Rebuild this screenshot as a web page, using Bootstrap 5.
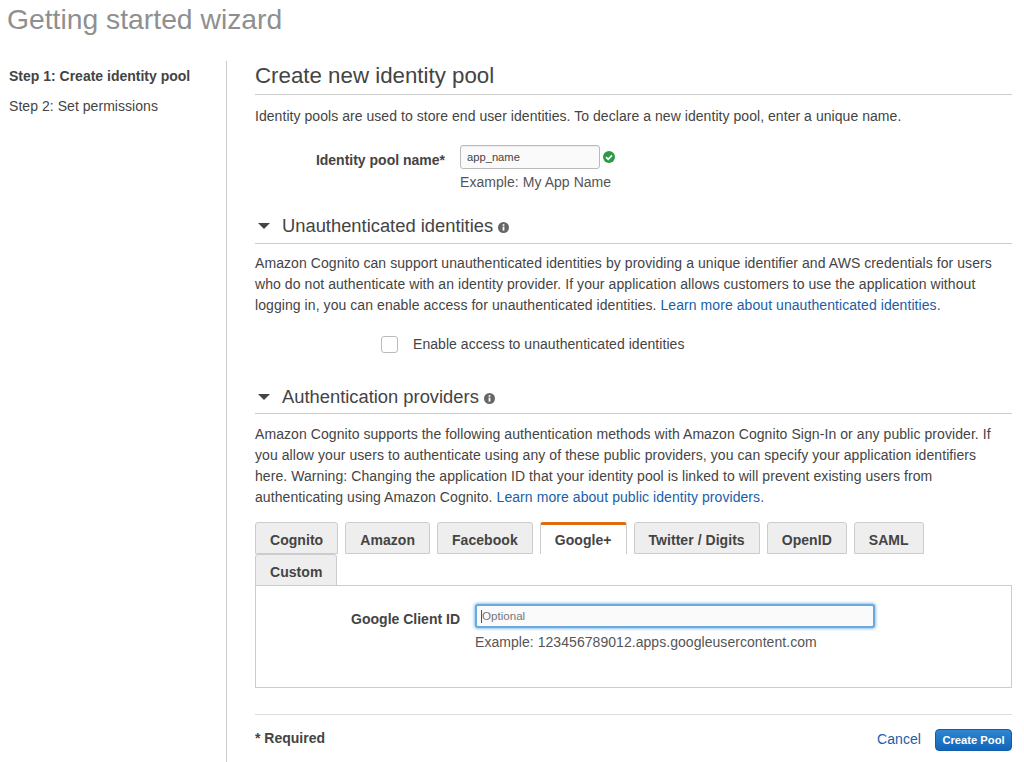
<!DOCTYPE html>
<html lang="en">
<head>
<meta charset="utf-8">
<title>Getting started wizard</title>
<link rel="stylesheet" href="https://cdn.jsdelivr.net/npm/bootstrap@5.3.0/dist/css/bootstrap.min.css">
<style>
html,body{height:762px;overflow:hidden;}
body{font-family:"Liberation Sans",Arial,sans-serif;font-size:14px;letter-spacing:.05px;line-height:21px;color:#444;background:#fff;}
.wiz-title{font-size:28.3px;line-height:34px;color:#8f8f8f;margin:0;padding:2px 0 0 7px;height:61px;font-weight:400;letter-spacing:0;}
.wiz-side{width:227px;height:701px;border-right:1px solid #ccc;padding:5px 0 0 9px;flex:none;}
.wiz-step{margin:0 0 9px;line-height:21px;}
.wiz-step-on{font-weight:700;letter-spacing:0;}
.wiz-main{width:757px;margin-left:28px;flex:none;}
.wiz-h{font-size:22.3px;line-height:28px;font-weight:400;color:#444;margin:0;padding:1px 0 4px;border-bottom:1px solid #ccc;letter-spacing:0;}
.wiz-h2{font-size:18.35px;line-height:24px;font-weight:400;color:#444;margin:0;padding-bottom:4px;border-bottom:1px solid #ccc;letter-spacing:0;}
.wiz-h2-up{margin-top:-1px;padding-bottom:5px;}
.wiz-caret{width:0;height:0;border-left:6px solid transparent;border-right:6px solid transparent;border-top:6px solid #444;margin:0 12px 0 3px;}
.wiz-intro{margin:11px 0 0;}
.wiz-form{margin:18px 0 22px;}
.wiz-para{margin:9px 0 0;letter-spacing:.07px;padding-right:3px;}
.wiz-para-low{margin-top:10px;}
.wiz-lbl{font-weight:700;color:#444;text-align:right;letter-spacing:0;}
.wiz-lbl-name{width:190px;padding-top:5px;margin-right:15px;}
.wiz-lbl-client{width:204px;padding-top:23px;margin-right:15px;}
.wiz-client{padding-top:18px;}
.wiz-input{border:1px solid #bbb;border-radius:3px;background:#fafafa;color:#444;font:11.2px/16px "Liberation Sans",Arial,sans-serif;padding:3px 6px;width:140px;height:24px;box-shadow:inset 0 1px 1px rgba(0,0,0,.06);}
.wiz-focus{width:400px;height:24px;margin:0;border:2px solid #6ba8dc;box-shadow:0 0 3px 1px #8fc3f0;padding:1px 5px 3px;font-size:11.6px;background:linear-gradient(#555,#555) 4px 50%/1px 13px no-repeat #fafafa;}
.wiz-input::placeholder{color:#777;opacity:1;}
.wiz-hint{color:#555;margin-top:3px;}
.wiz-client .wiz-hint{margin-top:4px;}
.wiz-ok{margin-left:3px;}
.wiz-info{margin-left:5px;margin-top:2px;}
a.wiz-link{color:#1a5ea8;text-decoration:none;}
.wiz-check{margin:18px 0 30px 126px;gap:15px;}
.wiz-box{width:17px;height:17px;border:1px solid #bbb;border-radius:3px;margin:0;flex:none;appearance:none;background:#fff;}
.wiz-tabs{gap:0 7px;margin:14px 0 0;padding:0;list-style:none;}
.wiz-tab{height:32px;padding:0 14px;border:1px solid #ccc;border-radius:3px 3px 0 0;background:#eee;font-weight:700;line-height:34px;color:#444;}
.wiz-tab-on{background:#fff;border-top:3px solid #dd6b10;border-bottom:0;line-height:30px;}
.wiz-panel{height:103px;border:1px solid #ccc;margin-top:-1px;}
.wiz-foot{border-top:1px solid #ddd;margin-top:26px;height:48px;}
.wiz-req{letter-spacing:0;}
.wiz-acts{gap:14px;margin-top:2px;}
.wiz-create{background:linear-gradient(#2f85cf,#1166bb);border:1px solid #0f5ca8;border-radius:4px;color:#fff;font-size:11.2px;font-weight:700;line-height:14px;padding:0;height:22px;width:77px;white-space:nowrap;}
</style>
</head>
<body>
<h1 class="wiz-title">Getting started wizard</h1>
<div class="d-flex">
  <aside class="wiz-side">
    <p class="wiz-step wiz-step-on">Step 1: Create identity pool</p>
    <p class="wiz-step">Step 2: Set permissions</p>
  </aside>
  <main class="wiz-main">
    <h2 class="wiz-h">Create new identity pool</h2>
    <p class="wiz-intro">Identity pools are used to store end user identities. To declare a new identity pool, enter a unique name.</p>
    <div class="wiz-form d-flex">
      <div class="wiz-lbl wiz-lbl-name">Identity pool name*</div>
      <div>
        <div class="d-flex align-items-center">
          <input class="wiz-input" value="app_name" aria-label="Identity pool name">
          <svg class="wiz-ok" width="12" height="12" viewBox="0 0 12 12" aria-hidden="true"><circle cx="6" cy="6" r="6" fill="#2a9a45"/><path d="M3 6.2l2.2 2.2L9 4.4" fill="none" stroke="#fff" stroke-width="1.7"/></svg>
        </div>
        <div class="wiz-hint">Example: My App Name</div>
      </div>
    </div>
    <h3 class="wiz-h2 wiz-h2-up d-flex align-items-center"><span class="wiz-caret"></span>Unauthenticated identities
      <svg class="wiz-info" width="11" height="11" viewBox="0 0 11 11" aria-hidden="true"><circle cx="5.5" cy="5.5" r="5.5" fill="#666"/><rect x="4.6" y="4.6" width="1.8" height="4" fill="#fff"/><rect x="4.6" y="2.2" width="1.8" height="1.6" fill="#fff"/></svg>
    </h3>
    <p class="wiz-para">Amazon Cognito can support unauthenticated identities by providing a unique identifier and AWS credentials for users who do not authenticate with an identity provider. If your application allows customers to use the application without logging in, you can enable access for unauthenticated identities. <a class="wiz-link" href="#">Learn more about unauthenticated identities.</a></p>
    <div class="wiz-check d-flex align-items-center">
      <input class="wiz-box" type="checkbox" aria-label="Enable access"><span>Enable access to unauthenticated identities</span>
    </div>
    <h3 class="wiz-h2 d-flex align-items-center"><span class="wiz-caret"></span>Authentication providers
      <svg class="wiz-info" width="11" height="11" viewBox="0 0 11 11" aria-hidden="true"><circle cx="5.5" cy="5.5" r="5.5" fill="#666"/><rect x="4.6" y="4.6" width="1.8" height="4" fill="#fff"/><rect x="4.6" y="2.2" width="1.8" height="1.6" fill="#fff"/></svg>
    </h3>
    <p class="wiz-para wiz-para-low">Amazon Cognito supports the following authentication methods with Amazon Cognito Sign-In or any public provider. If you allow your users to authenticate using any of these public providers, you can specify your application identifiers here. Warning: Changing the application ID that your identity pool is linked to will prevent existing users from authenticating using Amazon Cognito. <a class="wiz-link" href="#">Learn more about public identity providers.</a></p>
    <ul class="wiz-tabs d-flex flex-wrap">
      <li class="wiz-tab">Cognito</li>
      <li class="wiz-tab">Amazon</li>
      <li class="wiz-tab">Facebook</li>
      <li class="wiz-tab wiz-tab-on">Google+</li>
      <li class="wiz-tab">Twitter / Digits</li>
      <li class="wiz-tab">OpenID</li>
      <li class="wiz-tab">SAML</li>
      <li class="wiz-tab">Custom</li>
    </ul>
    <div class="wiz-panel d-flex">
      <div class="wiz-lbl wiz-lbl-client">Google Client ID</div>
      <div class="wiz-client">
        <input class="wiz-input wiz-focus" placeholder="Optional" aria-label="Google Client ID">
        <div class="wiz-hint">Example: 123456789012.apps.googleusercontent.com</div>
      </div>
    </div>
    <div class="wiz-foot d-flex justify-content-between align-items-center">
      <strong class="wiz-req">* Required</strong>
      <div class="wiz-acts d-flex align-items-center"><a class="wiz-link" href="#">Cancel</a><button class="wiz-create" type="button">Create Pool</button></div>
    </div>
  </main>
</div>
<script src="https://cdn.jsdelivr.net/npm/bootstrap@5.3.0/dist/js/bootstrap.bundle.min.js"></script>
</body>
</html>
